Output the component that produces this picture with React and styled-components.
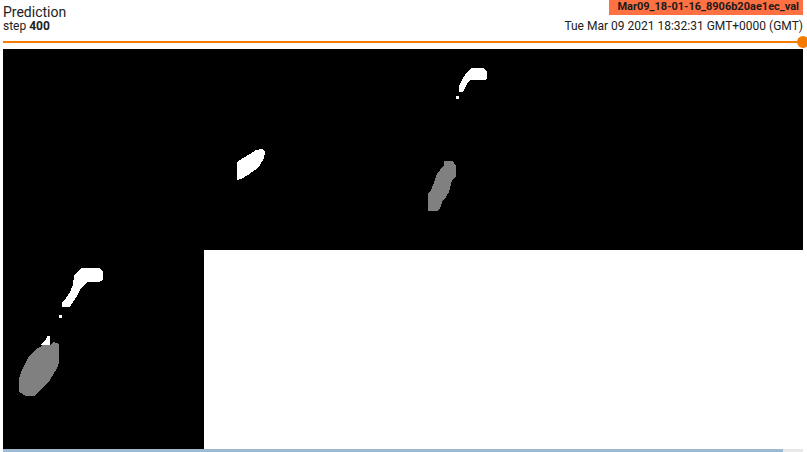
import React from "react";
import styled, { createGlobalStyle } from "styled-components";

const GlobalStyle = createGlobalStyle`
  body {
    margin: 0;
    background: #fff;
    font-family: Roboto, "Liberation Sans", sans-serif;
    color: #212121;
  }
`;

const Card = styled.div`
  width: 807px;
  height: 452px;
  overflow: hidden;
  background: #fff;
`;

const Header = styled.div`
  display: flex;
  justify-content: space-between;
  padding: 0 4px 0 3px;
  height: 36px;
`;

const Left = styled.div`
  padding-top: 5px;
`;

const Title = styled.div`
  font-size: 14px;
  line-height: 14px;
`;

const Step = styled.div`
  font-size: 12px;
  line-height: 14px;
  b {
    font-weight: 700;
  }
`;

const Right = styled.div`
  display: flex;
  flex-direction: column;
  align-items: flex-end;
`;

const RunChip = styled.div`
  background: ${(p) => p.color};
  color: #1a1a1a;
  font-size: 11px;
  font-weight: 700;
  line-height: 15px;
  padding: 0 4px 1px 8px;
  margin-top: -1px;
  white-space: nowrap;
`;

const Stamp = styled.div`
  font-size: 12px;
  line-height: 14px;
  margin-top: 4px;
  white-space: nowrap;
`;

const Slider = styled.div`
  display: flex;
  align-items: center;
  box-sizing: border-box;
  width: 809px;
  height: 12px;
  padding-left: 3px;
`;

const Track = styled.div`
  flex: 1;
  height: 2px;
  background: #f57c00;
`;

const Thumb = styled.div`
  flex-shrink: 0;
  width: 12px;
  height: 12px;
  border-radius: 50%;
  background: #f57c00;
`;

const Frame = styled.div`
  margin: 1px 0 0 3px;
  width: 800px;
  height: 400px;
  svg {
    display: block;
  }
`;

const Scroll = styled.div`
  display: flex;
  margin-left: 3px;
  width: 800px;
  height: 3px;
  background: #e8e8e8;
`;

const ScrollThumb = styled.div`
  width: ${(p) => p.size}px;
  background: #9fb9d2;
`;

const white = [
  "472,68 483,68 487,71 487,79 484,80 470,80 467,84 465,88 463,92 459,92 459,86 462,80 465,75 468,71",
  "237,162 243,158 250,154 256,150 262,149 265,152 264,158 260,165 255,170 248,175 243,178 237,180",
  "82,268 99,268 103,272 103,280 99,282 88,282 84,285 80,290 77,296 73,302 70,307 62,307 62,303 66,298 70,292 73,285 74,275 78,271",
  "47,336 50,336 50,345 40,345 43,342 46,340",
];

const gray = [
  "444,161 453,161 456,166 456,176 452,180 449,192 446,197 443,200 440,208 438,211 428,211 428,193 431,190 434,183 437,173 440,170 444,165",
  "43,345 50,345 53,342 59,344 59,363 57,368 53,375 50,380 46,385 40,390 35,396 26,396 19,392 19,378 22,370 27,360 30,355 35,350",
];

const Mask = () => (
  <svg width="800" height="400" viewBox="0 0 800 400" shapeRendering="crispEdges">
    <rect x="0" y="0" width="800" height="400" fill="#000" />
    <rect x="201" y="201" width="599" height="199" fill="#fff" />
    <g transform="translate(-3 -49)">
      {gray.map((pts, i) => (
        <polygon key={"g" + i} points={pts} fill="#808080" />
      ))}
      {white.map((pts, i) => (
        <polygon key={"w" + i} points={pts} fill="#fff" />
      ))}
      <rect x="456" y="96" width="3" height="3" fill="#fff" />
      <rect x="59" y="315" width="3" height="3" fill="#fff" />
    </g>
  </svg>
);

const App = () => {
  return (
    <Card>
      <GlobalStyle />
      <Header>
        <Left>
          <Title>Prediction</Title>
          <Step>
            step <b>400</b>
          </Step>
        </Left>
        <Right>
          <RunChip color="#ff7043">Mar09_18-01-16_8906b20ae1ec_val</RunChip>
          <Stamp>Tue Mar 09 2021 18:32:31 GMT+0000 (GMT)</Stamp>
        </Right>
      </Header>
      <Slider>
        <Track />
        <Thumb />
      </Slider>
      <Frame>
        <Mask />
      </Frame>
      <Scroll>
        <ScrollThumb size={780} />
      </Scroll>
    </Card>
  );
};

export default App;
